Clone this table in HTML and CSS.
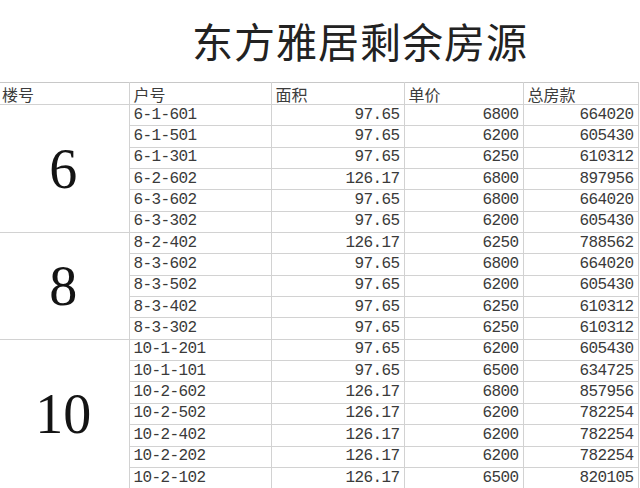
FILE: index.html
```html
<!DOCTYPE html>
<html lang="zh-CN">
<head>
<meta charset="utf-8">
<title>东方雅居剩余房源</title>
<link rel="stylesheet" href="styles.css">
</head>
<body>
<div class="page">
  <h1 class="title">东方雅居剩余房源</h1>
  <table class="sheet">
    <colgroup>
      <col class="c1"><col class="c2"><col class="c3"><col class="c4"><col class="c5">
    </colgroup>
    <thead>
      <tr class="head">
        <th class="first">楼号</th><th>户号</th><th>面积</th><th>单价</th><th>总房款</th>
      </tr>
    </thead>
    <tbody>
      <tr><td class="first bld" rowspan="6">6</td><td class="unit">6-1-601</td><td class="num">97.65</td><td class="num">6800</td><td class="num">664020</td></tr>
      <tr><td class="unit">6-1-501</td><td class="num">97.65</td><td class="num">6200</td><td class="num">605430</td></tr>
      <tr><td class="unit">6-1-301</td><td class="num">97.65</td><td class="num">6250</td><td class="num">610312</td></tr>
      <tr><td class="unit">6-2-602</td><td class="num">126.17</td><td class="num">6800</td><td class="num">897956</td></tr>
      <tr><td class="unit">6-3-602</td><td class="num">97.65</td><td class="num">6800</td><td class="num">664020</td></tr>
      <tr><td class="unit">6-3-302</td><td class="num">97.65</td><td class="num">6200</td><td class="num">605430</td></tr>
      <tr><td class="first bld" rowspan="5">8</td><td class="unit">8-2-402</td><td class="num">126.17</td><td class="num">6250</td><td class="num">788562</td></tr>
      <tr><td class="unit">8-3-602</td><td class="num">97.65</td><td class="num">6800</td><td class="num">664020</td></tr>
      <tr><td class="unit">8-3-502</td><td class="num">97.65</td><td class="num">6200</td><td class="num">605430</td></tr>
      <tr><td class="unit">8-3-402</td><td class="num">97.65</td><td class="num">6250</td><td class="num">610312</td></tr>
      <tr><td class="unit">8-3-302</td><td class="num">97.65</td><td class="num">6250</td><td class="num">610312</td></tr>
      <tr><td class="first bld" rowspan="7">10</td><td class="unit">10-1-201</td><td class="num">97.65</td><td class="num">6200</td><td class="num">605430</td></tr>
      <tr><td class="unit">10-1-101</td><td class="num">97.65</td><td class="num">6500</td><td class="num">634725</td></tr>
      <tr><td class="unit">10-2-602</td><td class="num">126.17</td><td class="num">6800</td><td class="num">857956</td></tr>
      <tr><td class="unit">10-2-502</td><td class="num">126.17</td><td class="num">6200</td><td class="num">782254</td></tr>
      <tr><td class="unit">10-2-402</td><td class="num">126.17</td><td class="num">6200</td><td class="num">782254</td></tr>
      <tr><td class="unit">10-2-202</td><td class="num">126.17</td><td class="num">6200</td><td class="num">782254</td></tr>
      <tr><td class="unit">10-2-102</td><td class="num">126.17</td><td class="num">6500</td><td class="num">820105</td></tr>
    </tbody>
  </table>
</div>
</body>
</html>
```

FILE: styles.css
```css
html, body {
  margin: 0;
  padding: 0;
  background: #ffffff;
}

.page {
  width: 640px;
  height: 488px;
  overflow: hidden;
  background: #ffffff;
}

.title {
  margin: 0;
  height: 82px;
  line-height: 80px;
  padding-left: 192px;
  font-family: "Noto Sans CJK SC", sans-serif;
  font-size: 41px;
  font-weight: 400;
  letter-spacing: 1px;
  color: #222222;
  text-align: left;
}

.sheet {
  border-collapse: collapse;
  table-layout: fixed;
  width: 638px;
}

.c1 { width: 129px; }
.c2 { width: 142px; }
.c3 { width: 133px; }
.c4 { width: 119px; }
.c5 { width: 115px; }

.sheet th,
.sheet td {
  border: 1px solid #d2d2d2;
  padding: 0 4px;
  overflow: hidden;
  white-space: nowrap;
}

.sheet .first {
  border-left: none;
  padding-left: 2px;
}

.head th {
  height: 21px;
  text-align: left;
  font-family: "Noto Sans CJK SC", sans-serif;
  font-size: 16px;
  font-weight: 400;
  line-height: 20px;
  color: #3c3c3c;
  border-top-color: #c8c8c8;
}

.sheet tbody tr {
  height: 21.35px;
}

.unit,
.num {
  font-family: "Liberation Mono", "DejaVu Sans Mono", monospace;
  font-size: 16px;
  letter-spacing: -0.6px;
  line-height: 19px;
  color: #3a3a3a;
}

.num {
  text-align: right;
  padding-right: 3px;
}

.bld {
  text-align: center;
  vertical-align: middle;
  font-family: "Liberation Serif", serif;
  font-size: 56px;
  line-height: 56px;
  color: #141414;
}
```
